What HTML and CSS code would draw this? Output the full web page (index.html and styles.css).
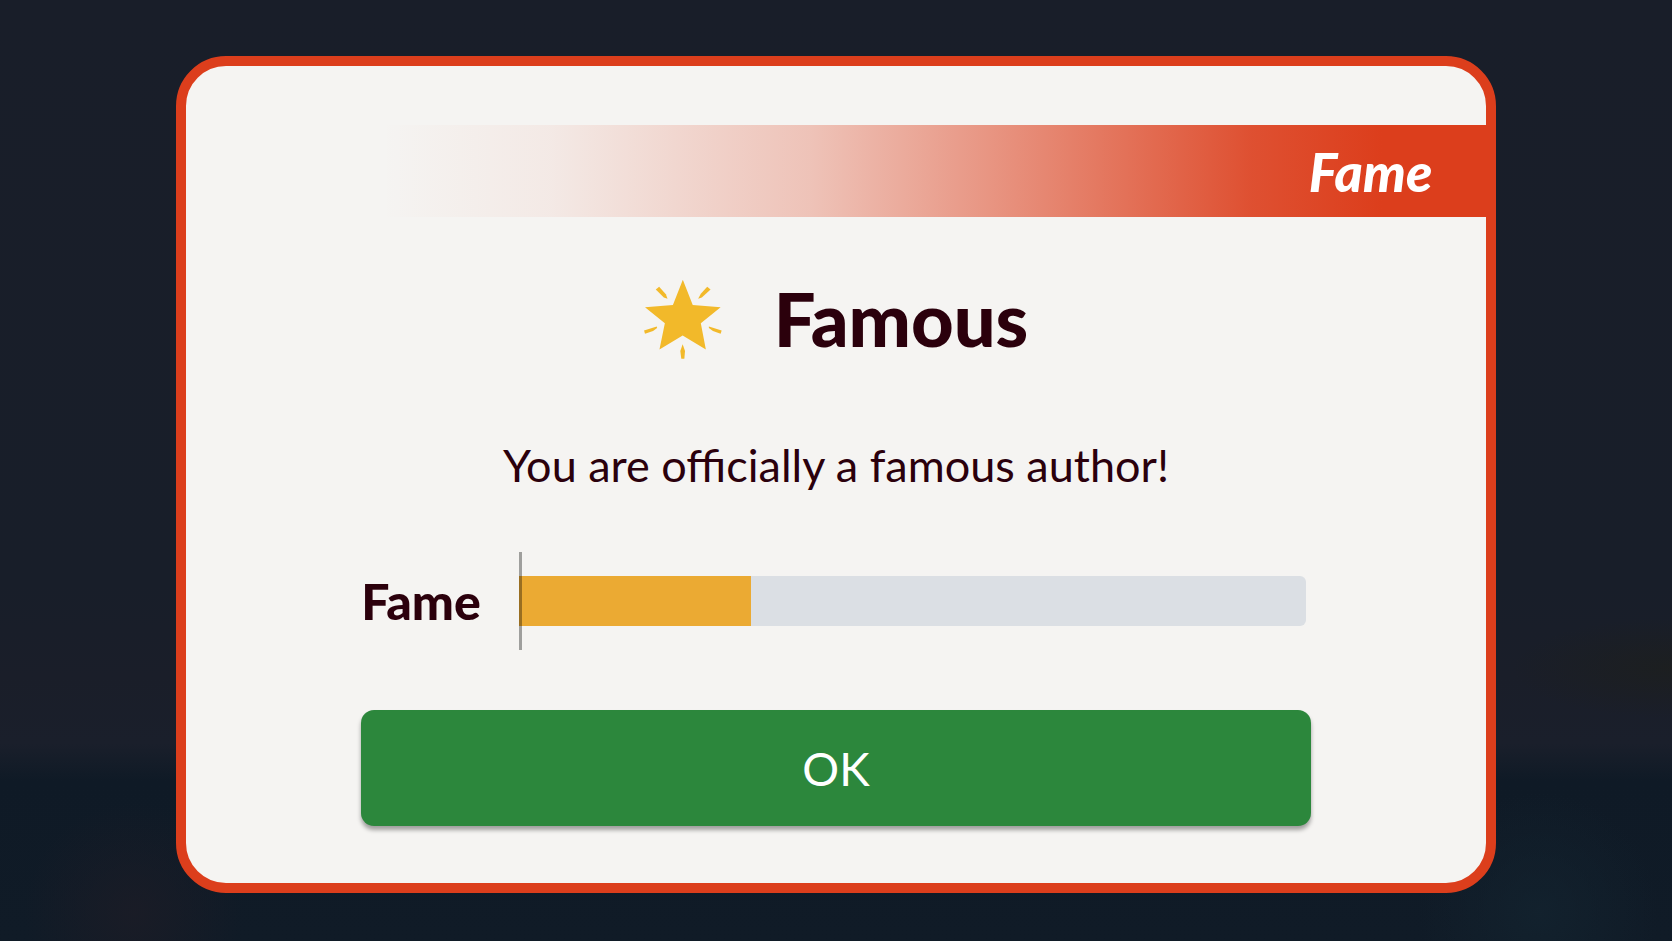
FILE: index.html
```html
<!DOCTYPE html>
<html lang="en">
<head>
  <meta charset="UTF-8">
  <meta name="viewport" content="width=device-width, initial-scale=1.0">
  <title>Famous</title>
  <link rel="stylesheet" href="styles.css">
</head>
<body>
  <main class="overlay">
    <section class="card" role="dialog" aria-labelledby="card-title">
      <div class="banner">Fame</div>
      <div class="content">
        <header class="heading">
          <svg class="star" viewBox="60 60 232 238" aria-hidden="true">
            <path d="M175.500 62 L205 137 L288 144 L229 192 L244 270 L175 228 L106 270 L122 192 L63 144 L146 137 Z"/>
            <path d="M95 91 L105 83 L125 105 L130 119 L119 115 Z"/>
            <path d="M258 91 L248 83 L229 104 L221 119 L232 115 Z"/>
            <path d="M60 213 L98 201 L99 206 L87 215 L63 223 Z"/>
            <path d="M291 213 L253 201 L253 206 L265 215 L288 223 Z"/>
            <path d="M175 254 L182 274 L180 297 L171 297 L168 274 Z"/>
          </svg>
          <h1 class="title" id="card-title">Famous</h1>
        </header>
        <p class="message">You are officially a famous author!</p>
        <div class="stat">
          <span class="stat-label" id="fame-label">Fame</span>
          <div class="stat-track" role="meter" aria-labelledby="fame-label" aria-valuemin="0" aria-valuemax="100" aria-valuenow="30">
            <div class="stat-fill" style="width: 29.500%"></div>
          </div>
        </div>
        <button type="button" class="ok-btn">OK</button>
      </div>
    </section>
  </main>
</body>
</html>
```

FILE: styles.css
```css
* { box-sizing: border-box; }
body { margin: 0; background: #181e2a; color: #2b000c; font-family: Lato, "Liberation Sans", sans-serif; }
.overlay {
  min-height: 100vh;
  display: flex;
  align-items: center;
  justify-content: center;
  padding: 56px 0 48px;
  /* dimmed page behind the card */
  background:
    radial-gradient(ellipse 110px 110px at 8% 97%, rgba(28, 28, 38, 0.8), rgba(28, 28, 38, 0)),
    radial-gradient(ellipse 120px 120px at 92% 97%, rgba(19, 35, 47, 0.8), rgba(19, 35, 47, 0)),
    radial-gradient(ellipse 160px 50px at 100% 71%, rgba(29, 31, 30, 0.8), rgba(29, 31, 30, 0)),
    linear-gradient(#191e29 0%, #181e29 62%, #1a1e29 72%, #1a1f2b 79%, #0f1a26 83%, #101b27 100%);
}
.card { width: 79%; background: #f5f4f2; border: 10px solid #dc3e1c; border-radius: 50px; padding: 59px 0 57px; }
.banner {
  height: 92px;
  padding-right: 54px;
  display: flex;
  align-items: center;
  justify-content: flex-end;
  background: linear-gradient(90deg, rgba(220, 62, 28, 0) 15%, rgba(220, 62, 28, 0.06) 28%, rgba(220, 62, 28, 0.27) 48%, rgba(220, 62, 28, 0.6) 66%, rgba(220, 62, 28, 0.9) 82%, #dc3e1c 92%);
  color: #fff;
  font-size: 54px;
  font-weight: 900;
  font-style: italic;
}
.content { margin: 0 auto; width: 73%; }
.heading { display: flex; align-items: center; justify-content: center; gap: 52px; margin-top: 62px; }
.star { width: 78px; height: 80px; fill: #f2b92a; }
.title { margin: 0; font-size: 74px; line-height: 80px; font-weight: 900; }
.message { margin: 76px 0 0; font-size: 45px; line-height: 60px; text-align: center; }
.stat { display: flex; align-items: center; gap: 38px; height: 98px; margin-top: 57px; padding-right: 5px; }
.stat-label { font-size: 50px; line-height: 60px; font-weight: 900; }
.stat-track { position: relative; flex: 1; height: 50px; background: #dbdfe4; border-radius: 0 6px 6px 0; }
.stat-fill { height: 100%; background: #ebaa33; }
/* start line */
.stat-track::before { content: ""; position: absolute; left: 0; top: -24px; bottom: -24px; width: 3px; background: rgba(0, 0, 0, 0.35); }
.ok-btn {
  display: block;
  width: 100%;
  height: 116px;
  margin-top: 60px;
  border: none;
  border-radius: 13px;
  background: #2c873c;
  box-shadow: 0 4px 4px rgba(0, 0, 0, 0.35);
  color: #fff;
  font-family: inherit;
  font-size: 46px;
  cursor: pointer;
}
```
